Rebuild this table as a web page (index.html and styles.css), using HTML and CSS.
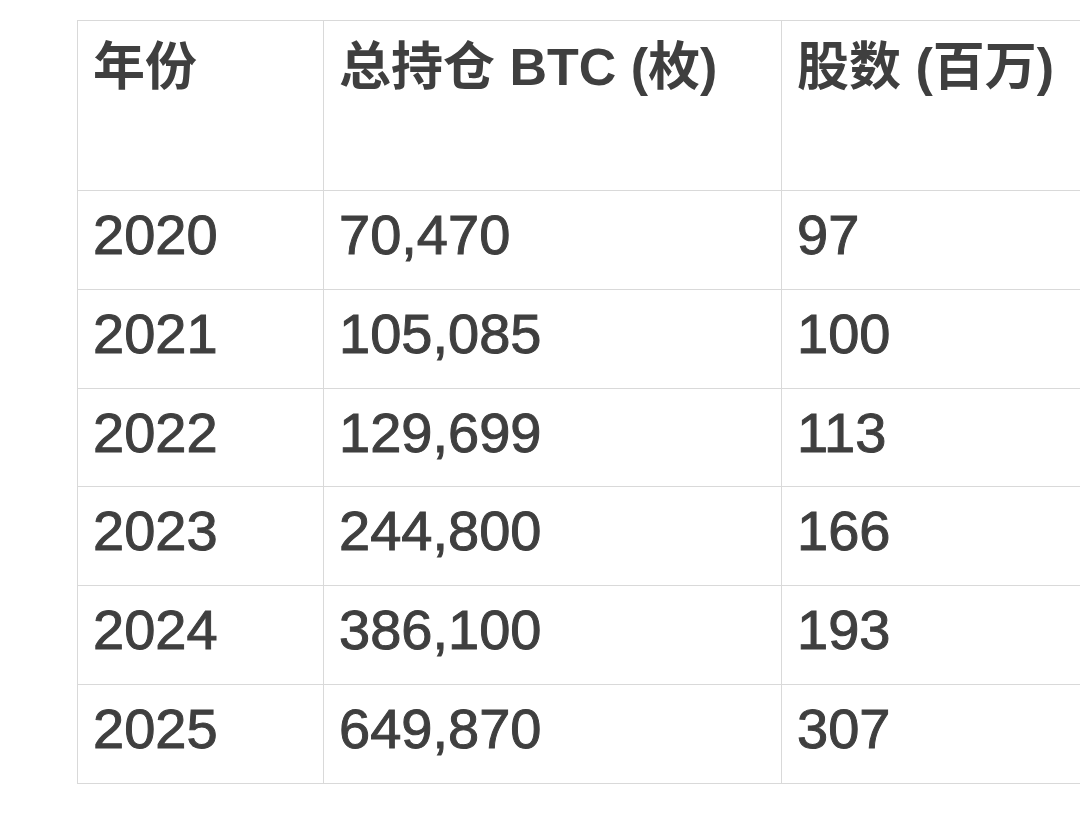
FILE: index.html
```html
<!DOCTYPE html>
<html lang="zh-CN">
<head>
<meta charset="utf-8">
<title>BTC 持仓</title>
<link rel="stylesheet" href="styles.css">
</head>
<body>
<div class="page">
  <table class="data-table">
    <colgroup>
      <col class="col-year">
      <col class="col-btc">
      <col class="col-shares">
    </colgroup>
    <thead>
      <tr>
        <th>年份</th>
        <th>总持仓 BTC (枚)</th>
        <th>股数 (百万)</th>
      </tr>
    </thead>
    <tbody>
      <tr><td>2020</td><td>70,470</td><td>97</td></tr>
      <tr><td>2021</td><td>105,085</td><td>100</td></tr>
      <tr><td>2022</td><td>129,699</td><td>113</td></tr>
      <tr><td>2023</td><td>244,800</td><td>166</td></tr>
      <tr><td>2024</td><td>386,100</td><td>193</td></tr>
      <tr><td>2025</td><td>649,870</td><td>307</td></tr>
    </tbody>
  </table>
</div>
</body>
</html>
```
FILE: styles.css
```css
html, body {
  margin: 0;
  padding: 0;
  background: #ffffff;
  overflow: hidden;
}

.page {
  box-sizing: border-box;
  width: 1080px;
  height: 819px;
  padding: 20px 0 0 77px;
  overflow: hidden;
}

.data-table {
  border-collapse: collapse;
  table-layout: fixed;
  width: 1104px;
  font-family: "Liberation Sans", "Noto Sans CJK SC", sans-serif;
  color: #3f3f3f;
}

.col-year { width: 246px; }
.col-btc { width: 458px; }
.col-shares { width: 400px; }

.data-table th,
.data-table td {
  border: 1px solid #d9d9d9;
  text-align: left;
  white-space: nowrap;
  overflow: hidden;
}

.data-table th {
  font-size: 52px;
  font-weight: 700;
  line-height: 64px;
  padding: 14px 15px 91px;
  vertical-align: top;
}

.data-table td {
  font-size: 56px;
  font-weight: 400;
  line-height: 64px;
  padding: 12px 15px 21.83px;
  vertical-align: top;
  -webkit-text-stroke: 1px #3f3f3f;
}
```
